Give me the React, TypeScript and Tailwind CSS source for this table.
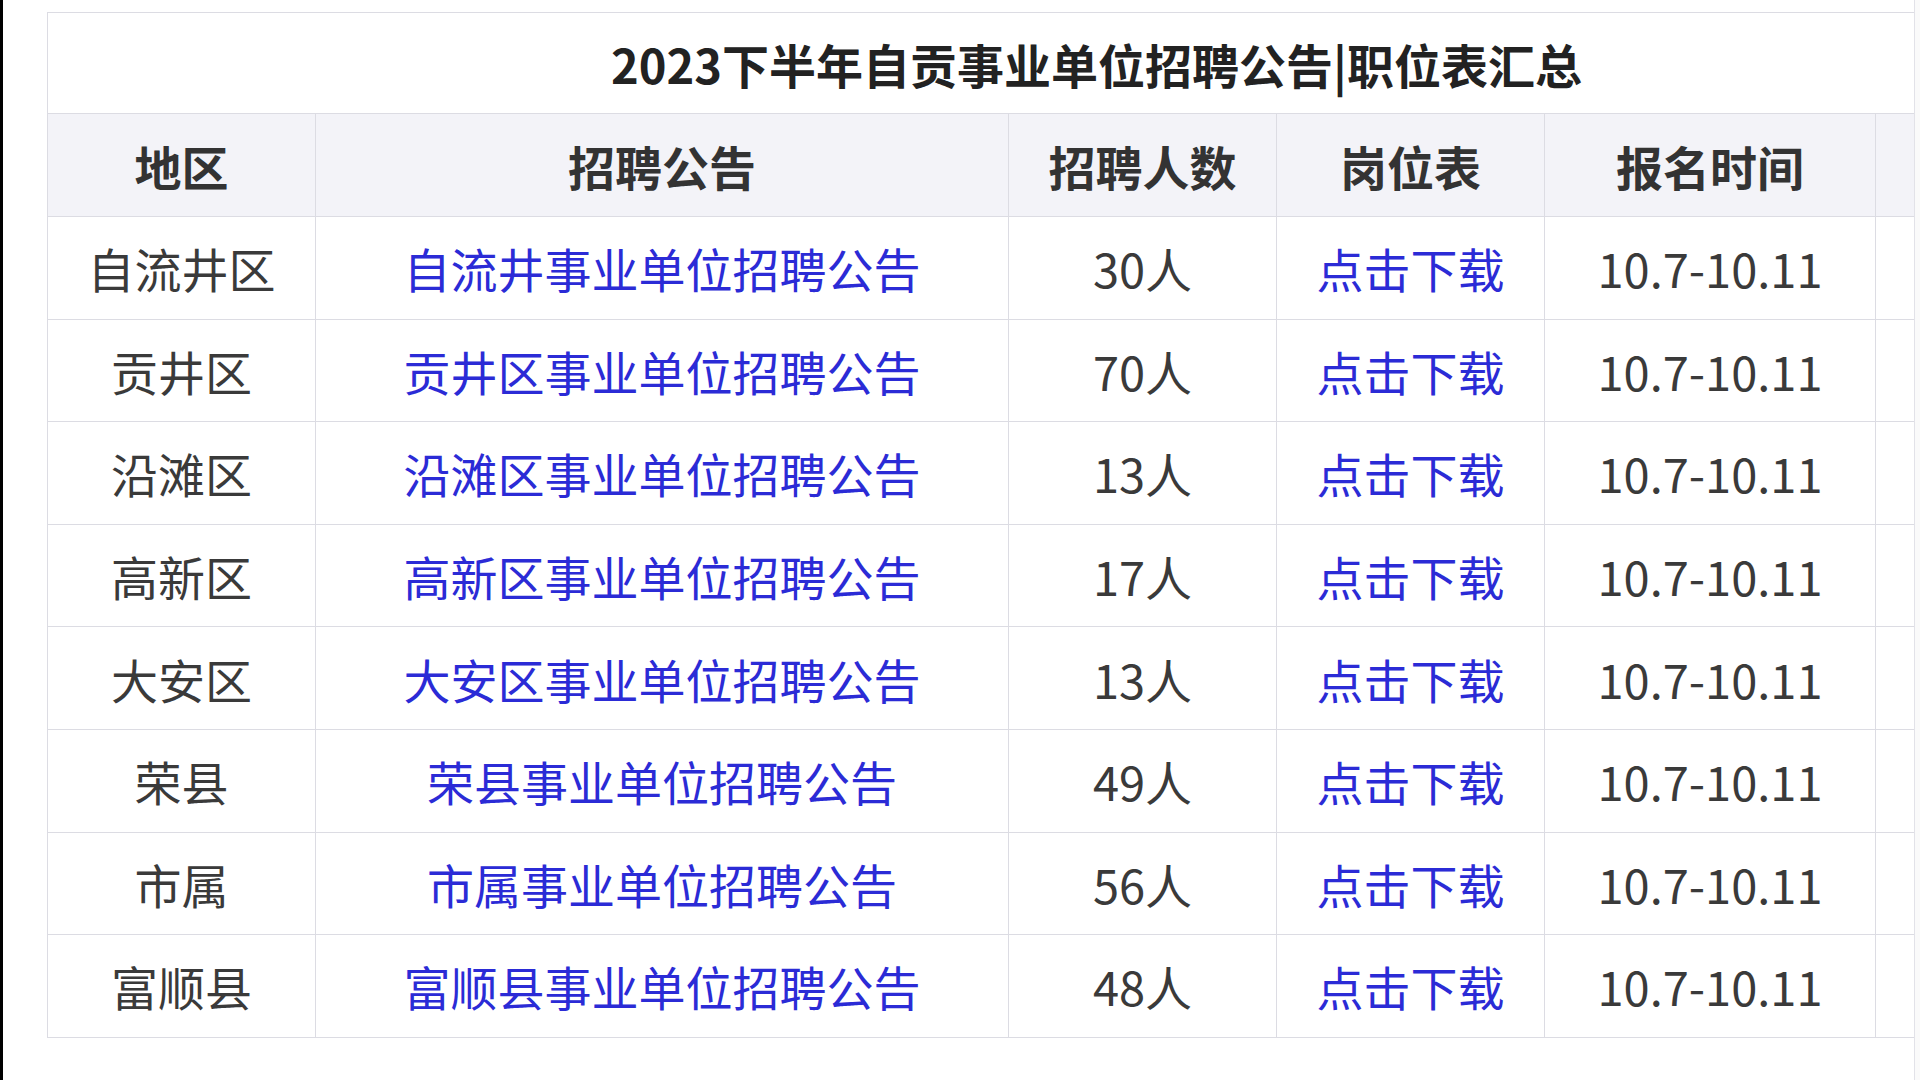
const rows = [
  { area: "自流井区", notice: "自流井事业单位招聘公告", count: "30人" },
  { area: "贡井区", notice: "贡井区事业单位招聘公告", count: "70人" },
  { area: "沿滩区", notice: "沿滩区事业单位招聘公告", count: "13人" },
  { area: "高新区", notice: "高新区事业单位招聘公告", count: "17人" },
  { area: "大安区", notice: "大安区事业单位招聘公告", count: "13人" },
  { area: "荣县", notice: "荣县事业单位招聘公告", count: "49人" },
  { area: "市属", notice: "市属事业单位招聘公告", count: "56人" },
  { area: "富顺县", notice: "富顺县事业单位招聘公告", count: "48人" },
];

const cell = "border border-[#dcdce3] text-center align-middle p-0";

export default function App() {
  return (
    <div
      className="flex h-[1080px] w-[1920px] overflow-hidden bg-white"
      style={{ fontFamily: '"Noto Sans CJK SC", "Noto Sans", sans-serif' }}
    >
      <div className="w-[3px] shrink-0 bg-black" />
      <div className="flex-1 overflow-hidden pl-[44px] pt-[12px]">
        <table className="w-[2098px] table-fixed border-collapse text-[47px] leading-none">
          <colgroup>
            <col className="w-[268px]" />
            <col className="w-[693px]" />
            <col className="w-[268px]" />
            <col className="w-[268px]" />
            <col className="w-[331px]" />
            <col className="w-[270px]" />
          </colgroup>
          <thead>
            <tr className="h-[101px]">
              <th colSpan={6} className={`${cell} font-bold text-[#222]`}>
                2023下半年自贡事业单位招聘公告|职位表汇总
              </th>
            </tr>
            <tr className="h-[103px] bg-[#f3f3f8]">
              <th className={`${cell} font-bold text-[#333]`}>地区</th>
              <th className={`${cell} font-bold text-[#333]`}>招聘公告</th>
              <th className={`${cell} font-bold text-[#333]`}>招聘人数</th>
              <th className={`${cell} font-bold text-[#333]`}>岗位表</th>
              <th className={`${cell} font-bold text-[#333]`}>报名时间</th>
              <th className={cell}></th>
            </tr>
          </thead>
          <tbody>
            {rows.map((r) => (
              <tr key={r.area} className="h-[102.6px]">
                <td className={`${cell} text-[#3a3a3a]`}>{r.area}</td>
                <td className={`${cell} text-[#2b2bd6]`}>{r.notice}</td>
                <td className={`${cell} text-[#3a3a3a]`}>{r.count}</td>
                <td className={`${cell} text-[#2b2bd6]`}>点击下载</td>
                <td className={`${cell} text-[#3a3a3a]`}>10.7-10.11</td>
                <td className={cell}></td>
              </tr>
            ))}
          </tbody>
        </table>
      </div>
      <div className="w-[6px] shrink-0 border-l border-[#e2e2e8] bg-[#fafafa]" />
    </div>
  );
}
